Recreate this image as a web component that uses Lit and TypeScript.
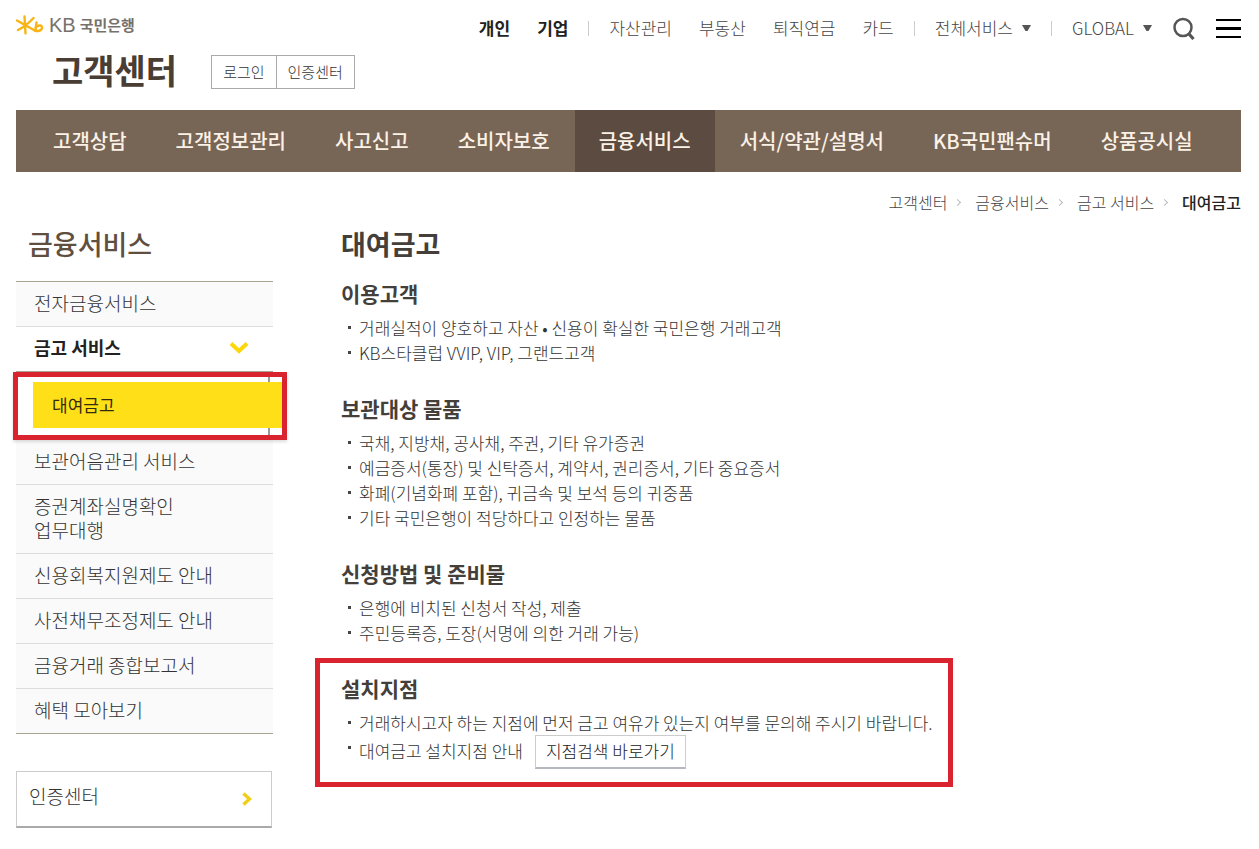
import { LitElement, html, css, svg, nothing } from "lit";
import { customElement } from "lit/decorators.js";
import { classMap } from "lit/directives/class-map.js";

interface Section {
  title: string;
  items: string[];
  boxed?: boolean;
  action?: string;
}

const MAIN_MENU = ["고객상담", "고객정보관리", "사고신고", "소비자보호", "금융서비스", "서식/약관/설명서", "KB국민팬슈머", "상품공시실"];

const SIDE_MENU: string[][] = [
  ["전자금융서비스"],
  ["금고 서비스"],
  ["보관어음관리 서비스"],
  ["증권계좌실명확인", "업무대행"],
  ["신용회복지원제도 안내"],
  ["사전채무조정제도 안내"],
  ["금융거래 종합보고서"],
  ["혜택 모아보기"],
];

const SECTIONS: Section[] = [
  {
    title: "이용고객",
    items: ["거래실적이 양호하고 자산 • 신용이 확실한 국민은행 거래고객", "KB스타클럽 VVIP, VIP, 그랜드고객"],
  },
  {
    title: "보관대상 물품",
    items: [
      "국채, 지방채, 공사채, 주권, 기타 유가증권",
      "예금증서(통장) 및 신탁증서, 계약서, 권리증서, 기타 중요증서",
      "화폐(기념화폐 포함), 귀금속 및 보석 등의 귀중품",
      "기타 국민은행이 적당하다고 인정하는 물품",
    ],
  },
  {
    title: "신청방법 및 준비물",
    items: ["은행에 비치된 신청서 작성, 제출", "주민등록증, 도장(서명에 의한 거래 가능)"],
  },
  {
    title: "설치지점",
    items: ["거래하시고자 하는 지점에 먼저 금고 여유가 있는지 여부를 문의해 주시기 바랍니다.", "대여금고 설치지점 안내"],
    boxed: true,
    action: "지점검색 바로가기",
  },
];

const caret = svg`<svg class="caret" viewBox="0 0 9 6" aria-hidden="true"><path d="M0 0h9L5.5 6h-2z" fill="#555"/></svg>`;

@customElement("app-root")
export class AppRoot extends LitElement {
  static styles = css`
    :host {
      display: block;
      box-sizing: border-box;
      padding: 8px 18px 22px 16px;
      background: #fff;
      color: #333;
      font-family: "Noto Sans CJK KR", "Noto Sans", sans-serif;
      font-size: 16px;
      font-weight: 300;
      line-height: 24px;
    }
    *, *::before, *::after { box-sizing: border-box; }
    a { color: inherit; text-decoration: none; }
    ul, ol { list-style: none; margin: 0; padding: 0; }
    h1, h2, h3, p { margin: 0; }
    button { font: inherit; color: inherit; background: none; border: 0; padding: 0; cursor: pointer; }

    .topbar { display: flex; justify-content: space-between; align-items: center; height: 40px; }
    .logo { display: flex; align-items: center; gap: 5px; color: #77716c; padding-bottom: 6px; }
    .logo svg { width: 28px; height: 20px; }
    .logo-text { display: flex; align-items: center; gap: 4px; }
    .logo-kb { font-family: "Liberation Sans", sans-serif; font-size: 20px; font-weight: 400; }
    .logo-name { font-size: 15px; font-weight: 700; }
    .global { display: flex; align-items: center; gap: 20px; font-size: 17px; color: #444; }
    .group { display: flex; gap: 27px; }
    .strong { font-weight: 700; color: #222; }
    .bar { width: 1px; height: 15px; background: #ccc; }
    .drop { display: flex; align-items: center; gap: 9px; }
    .caret { width: 9px; height: 6px; }
    .tools { display: flex; align-items: center; gap: 20px; }
    .tools button { display: flex; }
    .tools svg { display: block; }

    .titlebar { display: flex; align-items: center; gap: 34px; height: 48px; padding-left: 36px; }
    .site-title { padding-bottom: 4px; font-size: 34px; line-height: 48px; font-weight: 700; color: #4a3d33; }
    .account { display: flex; border: 1px solid #aaa; font-size: 15px; }
    .account a { padding: 4px 11px; }
    .account a + a { border-left: 1px solid #aaa; }

    .main-menu { display: flex; gap: 1px; margin-top: 14px; padding-left: 13px; background: #776555; color: #fbf1e6; }
    .main-menu a { padding: 19px 24px; font-size: 20px; font-weight: 500; white-space: nowrap; }
    .main-menu a.on { background: #5b4b40; }

    .crumbs { display: flex; justify-content: flex-end; align-items: center; margin-top: 18px; color: #444; }
    .crumbs li { display: flex; align-items: center; }
    .crumbs li + li::before {
      content: ""; width: 5px; height: 5px; margin: 0 15px 0 8px;
      border: solid #bbb; border-width: 1px 1px 0 0; transform: rotate(45deg);
    }
    .crumbs .here { font-weight: 500; color: #222; }

    .columns { display: grid; grid-template-columns: 257px minmax(0, 1fr); column-gap: 68px; align-items: start; margin-top: 10px; }
    .side-title { padding-left: 12px; font-size: 27px; line-height: 40px; font-weight: 500; color: #5f4f41; }
    .side-menu { margin-top: 17px; border: solid #a9a390; border-width: 1px 0; background: #fafafa; }
    .side-menu li + li { border-top: 1px solid #ddd; }
    .side-link { display: flex; justify-content: space-between; align-items: center; padding: 9px 24px 11px 18px; font-size: 19px; }
    .open { background: #fff; }
    .open .side-link { padding: 8px 24px 12px 18px; font-size: 18px; font-weight: 700; color: #222; }
    .side-menu li.open + li { border-top: 0; }
    .sub { position: relative; padding: 10px 0 12px 17px; border-top: 1px solid #a9a390; background: #fff; }
    .sub::before { content: ""; position: absolute; top: 0; bottom: 0; right: 3px; width: 2px; background: #999; }
    .sub::after { content: ""; position: absolute; inset: 0 -14px 0 -3px; border: 5px solid #d9232e; box-shadow: 0 2px 3px #0002; pointer-events: none; }
    .sub a { position: relative; display: block; margin-right: -9px; padding: 11px 19px; background: #ffe018; font-size: 17px; font-weight: 400; color: #332b10; }
    .cert { display: flex; justify-content: space-between; align-items: center; margin: 37px 1px 0 0; padding: 12px 19px 18px 12px; border: 1px solid #ccc; border-bottom: 2px solid #aaa; font-size: 19px; }
    .cert svg { position: relative; top: 3px; }

    .page-title { font-size: 27px; line-height: 40px; font-weight: 700; color: #443f3a; }
    .section { position: relative; width: fit-content; margin-bottom: 27px; }
    .page-title + .section { margin-top: 13px; }
    .section h3 { font-size: 21px; line-height: 32px; font-weight: 700; color: #443f3a; }
    .section ul { margin-top: 6px; }
    .section li { position: relative; display: flex; align-items: baseline; gap: 12px; padding-left: 18px; font-size: 17px; line-height: 25px; }
    .section li::before { content: ""; position: absolute; left: 7px; top: 11px; width: 3px; height: 3px; background: #444; }
    .boxed::after { content: ""; position: absolute; inset: -14px -20px -18px -26px; border: 5px solid #d9232e; pointer-events: none; }
    .go { padding: 3px 10px 4px; border: 1px solid #ccc; border-bottom: 2px solid #b5b8be; line-height: 24px; color: #222; }
  `;

  private renderHeader() {
    return html`
      <div class="topbar">
        <a class="logo" href="#" aria-label="KB국민은행">
          <svg viewBox="0 0 28 20" fill="none" stroke="#f8b515" stroke-width="2.4" stroke-linecap="round" aria-hidden="true">
            <path d="M8.500 1.500 9.500 18.500M1 5.500 17 14.500M2 15C8 12 13 8 17.500 3M20.500 7.500l-1 8M19.500 12.500c3-3 7-2.500 6.500 .5-.5 3-4.500 3.500-7.500 2.500" />
          </svg>
          <span class="logo-text"><span class="logo-kb">KB</span><span class="logo-name">국민은행</span></span>
        </a>
        <nav class="global" aria-label="전체">
          <div class="group"><a class="strong" href="#">개인</a><a class="strong" href="#">기업</a></div>
          <span class="bar"></span>
          <div class="group"><a href="#">자산관리</a><a href="#">부동산</a><a href="#">퇴직연금</a><a href="#">카드</a></div>
          <span class="bar"></span>
          <button class="drop">전체서비스 ${caret}</button>
          <span class="bar"></span>
          <button class="drop">GLOBAL ${caret}</button>
          <div class="tools">
            <button aria-label="검색">
              <svg width="24" height="24" viewBox="0 0 24 24" fill="none" stroke="#555">
                <circle cx="11" cy="11.500" r="8.500" stroke-width="2.500" /><path d="M17 18 21.500 23" stroke-width="3.200" />
              </svg>
            </button>
            <button aria-label="메뉴">
              <svg width="25" height="20" viewBox="0 0 25 20" fill="#000"><path d="M0 1h25v2H0zM0 9h25v3H0zM0 18h25v2H0z" /></svg>
            </button>
          </div>
        </nav>
      </div>
      <div class="titlebar">
        <h1 class="site-title">고객센터</h1>
        <div class="account"><a href="#">로그인</a><a href="#">인증센터</a></div>
      </div>
      <nav class="main-menu" aria-label="고객센터">
        ${MAIN_MENU.map((m) => html`<a href="#" class=${classMap({ on: m === "금융서비스" })}>${m}</a>`)}
      </nav>
      <ol class="crumbs">
        <li><a href="#">고객센터</a></li>
        <li><a href="#">금융서비스</a></li>
        <li><a href="#">금고 서비스</a></li>
        <li class="here">대여금고</li>
      </ol>
    `;
  }

  private renderSide() {
    return html`
      <aside>
        <h2 class="side-title">금융서비스</h2>
        <ul class="side-menu">
          ${SIDE_MENU.map((lines) => {
            const open = lines[0] === "금고 서비스";
            return html`<li class=${classMap({ open })}>
              <a class="side-link" href="#">
                <span>${lines.map((l, i) => html`${i ? html`<br />` : nothing}${l}`)}</span>
                ${open
                  ? html`<svg width="20" height="14" viewBox="0 0 20 14" fill="none" stroke="#fbd70c" stroke-width="4"><path d="M2 3.500 10 11 18 3.500" /></svg>`
                  : nothing}
              </a>
              ${open ? html`<div class="sub"><a href="#">대여금고</a></div>` : nothing}
            </li>`;
          })}
        </ul>
        <a class="cert" href="#">
          인증센터
          <svg width="10" height="14" viewBox="0 0 10 14" fill="none" stroke="#f0cf1c" stroke-width="3.500"><path d="M1.500 1.500 7.500 7 1.500 12.500" /></svg>
        </a>
      </aside>
    `;
  }

  render() {
    return html`
      <header>${this.renderHeader()}</header>
      <div class="columns">
        ${this.renderSide()}
        <main>
          <h2 class="page-title">대여금고</h2>
          ${SECTIONS.map(
            (s) => html`<section class=${classMap({ section: true, boxed: !!s.boxed })}>
              <h3>${s.title}</h3>
              <ul>
                ${s.items.map(
                  (t, i) => html`<li>${t}${s.action && i === s.items.length - 1 ? html`<button class="go">${s.action}</button>` : nothing}</li>`
                )}
              </ul>
            </section>`
          )}
        </main>
      </div>
    `;
  }
}
